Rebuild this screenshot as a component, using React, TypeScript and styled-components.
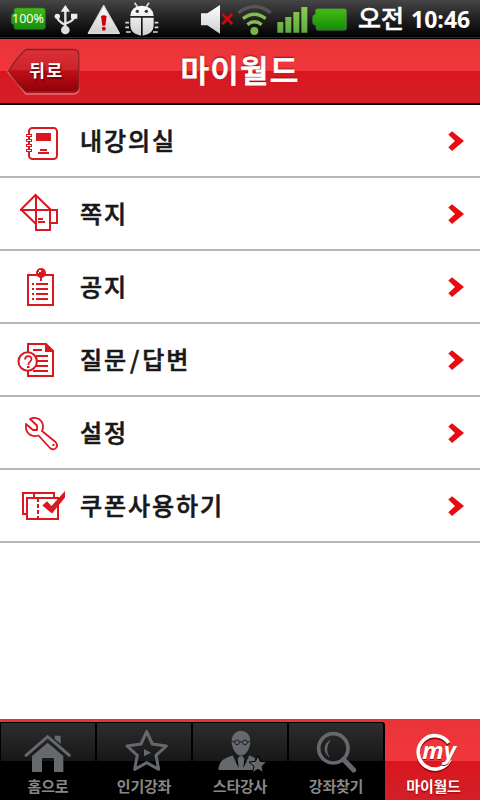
import React from "react";
import styled, { createGlobalStyle } from "styled-components";

const Global = createGlobalStyle`
  * { box-sizing: border-box; }
  body { margin: 0; background: #fff; font-family: "Noto Sans CJK KR", sans-serif; overflow: hidden; }
  svg { display: block; flex: none; }
`;

const Screen = styled.div`
  width: 480px;
  height: 800px;
  display: flex;
  flex-direction: column;
  background: #fff;
`;

const StatusBar = styled.header`
  height: 39px;
  flex: none;
  display: flex;
  align-items: flex-start;
  padding-left: 10px;
  background: linear-gradient(#454545 0, #262626 16px, #030303 36px, #000 37px, #292929 37px, #292929 38px, #000 38px);
`;

const Glyph = styled.svg<{ $gap?: number }>`
  height: 38px;
  margin-left: ${(p) => p.$gap ?? 0}px;
`;

const Clock = styled.div`
  display: flex;
  align-items: flex-start;
  gap: 7px;
  margin-left: 10px;
  height: 38px;
  color: #fff;
  font: 700 23px/38px "Open Sans", sans-serif;
  white-space: nowrap;
`;

const Meridiem = styled.span`
  font: 500 25px/35px "Noto Sans CJK KR", sans-serif;
  -webkit-text-stroke: 0.5px #fff;
`;

const TitleBar = styled.div`
  height: 66px;
  flex: none;
  display: grid;
  grid-template-columns: 90px 300px 90px;
  border-bottom: 2px solid #050505;
  background: linear-gradient(#e83437 0, #f2373c 32px, #d9161f 32px, #d22028 64px);
`;

const BackButton = styled.button`
  position: relative;
  margin: 8px 0 0 7px;
  width: 74px;
  height: 48px;
  padding: 0 0 0 5px;
  border: 0;
  background: none;
  color: #fff;
  font: 700 17px/42px "Noto Sans CJK KR", sans-serif;
  letter-spacing: 1.5px;
  text-shadow: 1px 2px 2px #600;
`;

const BackShape = styled.svg`
  position: absolute;
  inset: 0;
`;

const BackLabel = styled.span`
  position: relative;
  display: block;
  margin-top: -3px;
`;

const Title = styled.h1`
  margin: 0;
  text-align: center;
  color: #fff;
  font: 500 31px/60px "Noto Sans CJK KR", sans-serif;
  letter-spacing: 1.2px;
  -webkit-text-stroke: 0.8px #fff;
  text-shadow: 0 -1px 2px #700;
`;

const Menu = styled.nav`
  flex: 1;
  display: flex;
  flex-direction: column;
`;

const MenuRow = styled.a`
  height: 73px;
  display: flex;
  align-items: center;
  border-bottom: 2px solid #b6b6b6;
  color: #181818;
`;

const MenuLabel = styled.span`
  flex: 1;
  font: 500 24px/68px "Noto Sans CJK KR", sans-serif;
  height: 70px;
  letter-spacing: 1.9px;
  -webkit-text-stroke: 0.6px #181818;
`;

const Slash = styled.span`
  margin: 0 1px 0 2px;
`;

const TabBar = styled.footer`
  height: 81px;
  flex: none;
  display: grid;
  grid-template-columns: 96px 96px 96px 97px 95px;
  background: linear-gradient(#e83439 0, #f2373c 42px, #d9161f 42px, #d22028 81px);
`;

const Tab = styled.div<{ $active?: boolean }>`
  margin-top: 3px;
  height: 78px;
  color: ${(p) => (p.$active ? "#fff" : "#888")};
  border: ${(p) => (p.$active ? "0" : "1px solid #000")};
  border-bottom: 0;
  background: ${(p) => (p.$active ? "none" : "linear-gradient(#2d2d2d 0, #171717 38px, #000 38px)")};
  overflow: hidden;
  &:nth-child(4) { border-right-width: 2px; border-top-right-radius: 3px; }
`;

const TabIcon = styled.svg<{ $active?: boolean }>`
  margin: ${(p) => (p.$active ? "0 0 0 -1px" : "-1px 0 0 -1px")};
`;

const TabLabel = styled.div<{ $active?: boolean }>`
  margin-top: -7px;
  padding-left: ${(p) => (p.$active ? 2 : 0)}px;
  text-align: center;
  white-space: nowrap;
  font: 700 15px/22px "Noto Sans CJK KR", sans-serif;
  letter-spacing: -0.2px;
  text-shadow: ${(p) => (p.$active ? "0 1px 2px #900" : "none")};
`;

const RED = "#db1720";
const line = { fill: "none", stroke: RED, strokeWidth: 2 };

const icons = {
  notebook: (
    <>
      <rect x="29" y="23" width="28" height="31" rx="3.5" {...line} />
      <path d="M36 28h15v8H36zM40 44h7v2h-7zM38 47h11v2H38z" fill={RED} />
      {[29.5, 34.5, 39.5, 44.5].map((y) => (
        <rect key={y} x="26.5" y={y} width="5" height="2" fill="#fff" stroke={RED} />
      ))}
    </>
  ),
  note: (
    <>
      <path d="M21 31.5 35.5 17 51 32M21 31.5 36 46M20 32h37v13h-6M36 17v35h14V32" {...line} />
      <path d="M38 40h5v2h-5zM38 43h7v2h-7z" fill={RED} />
    </>
  ),
  notice: (
    <>
      <rect x="28" y="24" width="25" height="30" {...line} />
      <circle cx="41" cy="22" r="5" fill={RED} />
      <path d="M41 24v6M32 33h2M36 33h12M32 38h2M36 38h12M32 43h2M36 43h12M32 48h2M36 48h12" {...line} />
      <path d="M39 19h2v2h-2zM38 21h1v1h-1z" fill="#fff" />
    </>
  ),
  question: (
    <>
      <path d="M28 52V20h18l7 7v25zM33 26h9M36 32h12M36 37h12M36 42h12M33 47h15" {...line} />
      <path d="M45 19v9h9z" fill={RED} />
      <circle cx="27.7" cy="37.5" r="9.2" {...line} fill="#fff" />
      <path d="M25 35.5c0-4.5 6.5-4.5 6.5-.5 0 2.5-3.2 3-3.2 6" {...line} strokeWidth="1.7" />
      <path d="M27 42h2.5v2H27z" fill={RED} />
    </>
  ),
  wrench: (
    <>
      <path d="M30 22c4-2 9-1 11.500 2.500 2 3 2 6 .5 9.500l13.500 11c4 4.500-1 9.500-5.500 6L38.500 38.500c-7 2-12.500-2-12.500-8.500v-3l7 6h4v-4.500z" {...line} strokeWidth="1.8" strokeLinejoin="round" />
      <path d="M52.500 48h2" {...line} />
    </>
  ),
  coupon: (
    <>
      <path d="M27 44h-4V23h31v5M34 23v5" {...line} />
      <rect x="27" y="28" width="31" height="21" {...line} />
      <path d="M38 28v21" {...line} strokeDasharray="4 2" />
      <path d="m42.300 35.500 4.700-4.200 4.500 4.700L65 21v6.500L52 43.500z" fill={RED} />
    </>
  ),
};

const menu: { icon: keyof typeof icons; label: React.ReactNode }[] = [
  { icon: "notebook", label: "내강의실" },
  { icon: "note", label: "쪽지" },
  { icon: "notice", label: "공지" },
  { icon: "question", label: <>질문<Slash>/</Slash>답변</> },
  { icon: "wrench", label: "설정" },
  { icon: "coupon", label: "쿠폰사용하기" },
];

const GREY = "#65686d";
const tabs = [
  {
    label: "홈으로",
    box: "0 36 288 180",
    art: (
      <>
        <path d="M164 77h18v25l-18-15zM96 138l47-40 47 40v48h-28v-42h-36v42H96z" fill={GREY} />
        <path d="m78 136 65-56 65 56" fill="none" stroke={GREY} strokeWidth="9" strokeLinecap="round" />
      </>
    ),
  },
  {
    label: "인기강좌",
    box: "288 36 288 180",
    art: (
      <>
        <path d="m440 65 17 37 42 6-31 28 8 42-36-20-36 20 8-42-31-28 42-6z" fill="none" stroke={GREY} strokeWidth="9" strokeLinejoin="round" />
        <path d="m432 117 21 11-21 11z" fill={GREY} />
      </>
    ),
  },
  {
    label: "스타강사",
    box: "36 36 288 180",
    art: (
      <>
        <path d="M155 94c0-42 56-42 56 0 0 20-12 43-28 43s-28-23-28-43zM115 180c2-28 17-34 43-44l18 38-3-27 5-8h10l5 8-3 27 18-38 16 7 5 37z" fill={GREY} />
        <g fill="none" stroke="#1d1e20" strokeWidth="3"><circle cx="171" cy="97" r="7" /><circle cx="195" cy="97" r="7" /><path d="M155 95h9m14 1h10m14-1h9" /></g>
        <path d="m234 137 7 17 19 2-14 13 4 19-16-10-17 10 5-19-15-13 19-2z" fill={GREY} stroke="#000" strokeWidth="3" />
      </>
    ),
  },
  {
    label: "강좌찾기",
    box: "324 36 288 180",
    art: (
      <>
        <circle cx="460" cy="115" r="44" fill="none" stroke={GREY} strokeWidth="11" />
        <path d="m490 148 31 32" stroke={GREY} strokeWidth="15" strokeLinecap="round" />
        <path d="M450 92c-18 8-21 34-3 48-9-16-9-32 3-48z" fill={GREY} stroke={GREY} strokeWidth="2" />
      </>
    ),
  },
  {
    label: "마이월드",
    box: "75 36 288 180",
    active: true,
    art: (
      <>
        <g fill="none" strokeWidth="11">
          <path d="M269 99a50 50 0 1 0 4 49" stroke="#a00009" transform="translate(0 5)" />
          <path d="M269 99a50 50 0 1 0 4 49" stroke="#fff" />
        </g>
        <g fontFamily="Open Sans, sans-serif" fontWeight="700" fontStyle="italic" fontSize="67" fill="#fff">
          <text x="190" y="151" fill="#a00009" textLength="101" lengthAdjust="spacingAndGlyphs">my</text>
          <text x="190" y="147" textLength="101" lengthAdjust="spacingAndGlyphs">my</text>
        </g>
      </>
    ),
  },
];

export default function App() {
  return (
    <>
      <Global />
      <Screen>
        <StatusBar>
          <Glyph width="36" viewBox="30 0 108 114">
            <defs>
              <linearGradient id="battery" x2="0" y2="1"><stop stopColor="#42bd13" /><stop offset="1" stopColor="#138c0a" /></linearGradient>
              <linearGradient id="metal" x2="0" y2="1"><stop stopColor="#fff" /><stop offset="1" stopColor="#cfcfcf" /></linearGradient>
              <linearGradient id="signal" x2="0" y2="1"><stop stopColor="#8dcc4c" /><stop offset="1" stopColor="#60a844" /></linearGradient>
            </defs>
            <path d="M48 24h81q7 0 7 7v50q0 7-7 7H48q-6 0-6-7v-8h-4q-4-2-4-7V47q0-6 8-7v-9q0-7 6-7z" fill="url(#battery)" stroke="#42623c" strokeWidth="2" />
            <text x="36" y="70" fill="#fff" fontFamily="Noto Sans, sans-serif" fontSize="40" textLength="96" lengthAdjust="spacingAndGlyphs">100%</text>
          </Glyph>
          <Glyph width="24" viewBox="162 0 72 114" $gap={8}>
            <g fill="none" stroke="#e6e6e6" strokeWidth="7"><path d="M196 28v60M172 50q-1 13 24 25M222 50q1 12-26 21" /></g>
            <path d="m196 15 14 20h-28zM213 41h19v15h-19z" fill="#eee" /><circle cx="172" cy="49" r="8" fill="#eee" /><circle cx="196" cy="90" r="13" fill="#ddd" />
          </Glyph>
          <Glyph width="34" viewBox="260 0 102 114" $gap={9}>
            <path d="m310 17 47 83h-93z" fill="url(#metal)" stroke="#ddd" strokeWidth="4" strokeLinejoin="round" />
            <path d="M302 48q8-5 17 0l-4 29h-9z" fill="#d40008" /><circle cx="310.500" cy="86" r="6" fill="#d40008" />
          </Glyph>
          <Glyph width="34" viewBox="374 0 102 114" $gap={4}>
            <path d="M390 48q2-30 34-31 34 1 36 31zM390 53h32v54q-32-4-32-31zM427 53h33v23q0 27-33 31z" fill="url(#metal)" />
            <path d="m411 20-8-12m35 12 8-12M375 68h11m-11 14h11m-9 14h14m72-28h11m-11 14h11m-16 14h14" stroke="#ddd" strokeWidth="5" />
            <g fill="#333"><circle cx="411" cy="34" r="5" /><circle cx="438" cy="34" r="5" /></g>
          </Glyph>
          <Glyph width="33" viewBox="60 0 99 114" $gap={41}>
            <path d="M63 40h19l38-25v86L82 76H63z" fill="url(#metal)" />
            <path d="m127 42 30 30m0-30-30 30" stroke="#d2080c" strokeWidth="8" />
          </Glyph>
          <Glyph width="35" viewBox="170 0 105 114" $gap={4}>
            <g fill="none" strokeWidth="10"><path d="M174 38q49-37 97 0" stroke="#555" /><path d="M188 56q34-27 68 0M201 74q21-17 43 0" stroke="#84bd4b" /></g>
            <circle cx="222" cy="93" r="12" fill="#72b545" />
          </Glyph>
          <Glyph width="31" viewBox="290 0 93 114" $gap={5}>
            <path d="M291 66h18v32h-18zM315 51h18v47h-18zM339 36h18v62h-18zM363 21h18v77h-18z" fill="url(#signal)" />
          </Glyph>
          <Glyph width="36" viewBox="398 0 108 114" $gap={4}>
            <path d="M416 26h79q7 0 7 7v51q0 7-7 7h-79q-6 0-6-7v-9h-5q-5-2-5-8V50q0-6 8-7v-10q0-7 8-7z" fill="url(#battery)" stroke="#526850" strokeWidth="2" />
          </Glyph>
          <Clock><Meridiem>오전</Meridiem><span>10:46</span></Clock>
        </StatusBar>
        <TitleBar>
          <BackButton>
            <BackShape width="74" height="48" viewBox="0 0 74 48">
              <defs>
                <linearGradient id="back" x2="0" y2="1"><stop stopColor="#db3036" /><stop offset=".48" stopColor="#cb242b" /><stop offset=".5" stopColor="#bd1018" /><stop offset="1" stopColor="#900006" /></linearGradient>
              </defs>
              <path d="M19 4h47q6 0 6 6v31q0 6-6 6H19L1 25z" fill="none" stroke="#f2686c" strokeWidth="1.500" />
              <path d="M19 2.500h47q6 0 6 6V39q0 6-6 6H19Q10 37 1.500 24 11 9 19 2.500z" fill="url(#back)" stroke="#82252a" strokeWidth="1.300" />
            </BackShape>
            <BackLabel>뒤로</BackLabel>
          </BackButton>
          <Title>마이월드</Title>
        </TitleBar>
        <Menu>
          {menu.map((item) => (
            <MenuRow key={item.icon}>
              <svg width="80" height="71">{icons[item.icon]}</svg>
              <MenuLabel>{item.label}</MenuLabel>
              <svg width="40" height="71"><path d="m8.300 29.500 3.700-3.200L24 36l-12 10-3.700-3.700 6.700-6.300z" fill="#e90b0f" /></svg>
            </MenuRow>
          ))}
        </Menu>
        <TabBar>
          {tabs.map((tab) => (
            <Tab key={tab.label} $active={tab.active}>
              <TabIcon width="96" height="60" viewBox={tab.box} $active={tab.active}>{tab.art}</TabIcon>
              <TabLabel $active={tab.active}>{tab.label}</TabLabel>
            </Tab>
          ))}
        </TabBar>
      </Screen>
    </>
  );
}
